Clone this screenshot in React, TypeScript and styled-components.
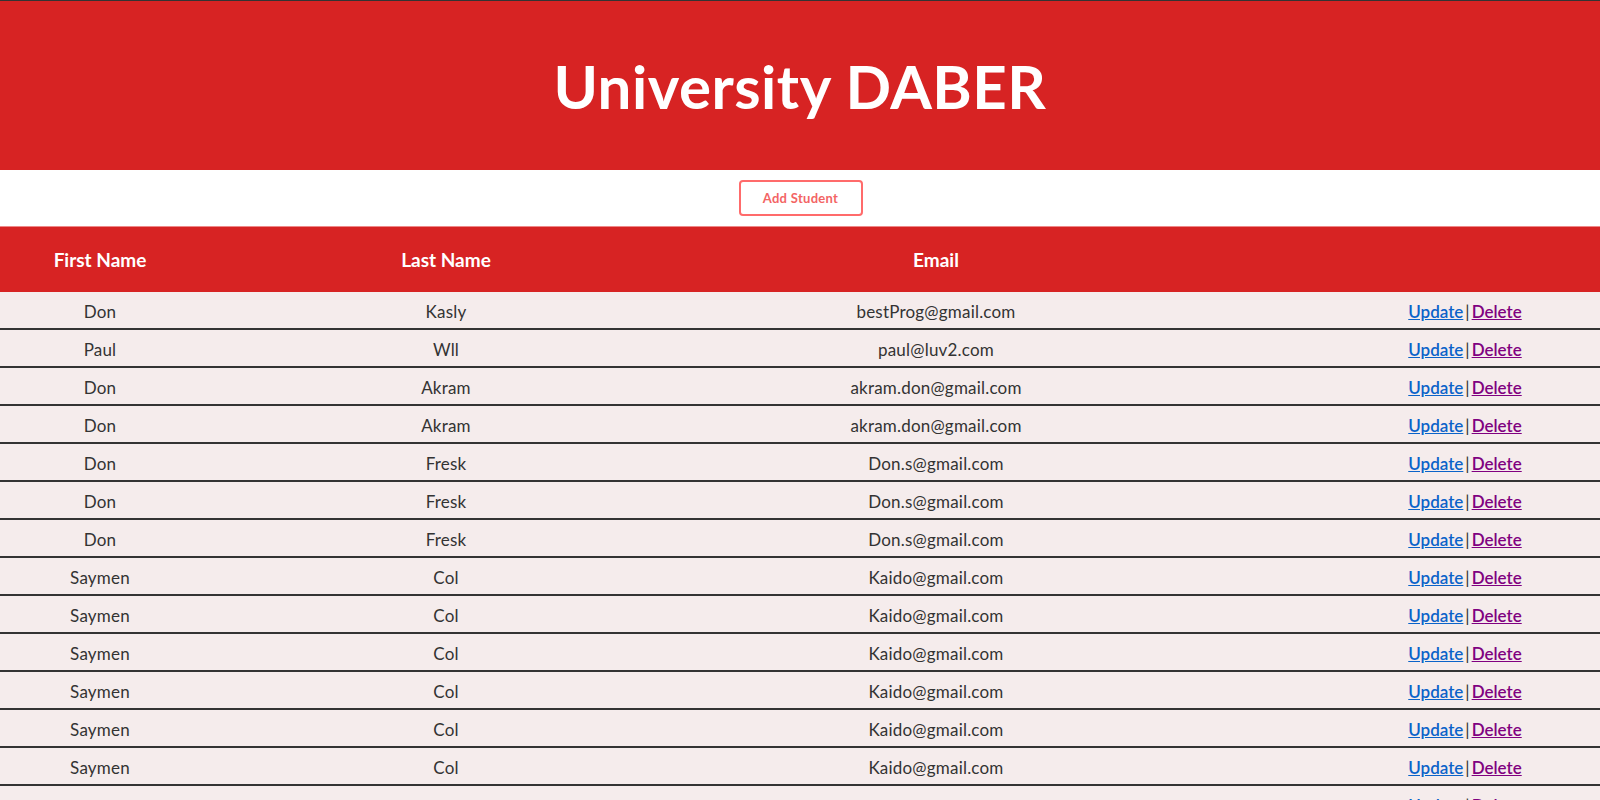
import React from "react";
import styled, { createGlobalStyle } from "styled-components";

type Student = {
  firstName: string;
  lastName: string;
  email: string;
};

const students: Student[] = [
  { firstName: "Don", lastName: "Kasly", email: "bestProg@gmail.com" },
  { firstName: "Paul", lastName: "Wll", email: "paul@luv2.com" },
  { firstName: "Don", lastName: "Akram", email: "akram.don@gmail.com" },
  { firstName: "Don", lastName: "Akram", email: "akram.don@gmail.com" },
  { firstName: "Don", lastName: "Fresk", email: "Don.s@gmail.com" },
  { firstName: "Don", lastName: "Fresk", email: "Don.s@gmail.com" },
  { firstName: "Don", lastName: "Fresk", email: "Don.s@gmail.com" },
  { firstName: "Saymen", lastName: "Col", email: "Kaido@gmail.com" },
  { firstName: "Saymen", lastName: "Col", email: "Kaido@gmail.com" },
  { firstName: "Saymen", lastName: "Col", email: "Kaido@gmail.com" },
  { firstName: "Saymen", lastName: "Col", email: "Kaido@gmail.com" },
  { firstName: "Saymen", lastName: "Col", email: "Kaido@gmail.com" },
  { firstName: "Saymen", lastName: "Col", email: "Kaido@gmail.com" },
  { firstName: "", lastName: "", email: "" },
];

export default function App() {
  return (
    <>
      <GlobalStyle />
      <Page>
        <Header>
          <Title>University DABER</Title>
        </Header>
        <Toolbar>
          <AddButton type="button">Add Student</AddButton>
        </Toolbar>
        <StudentTable>
          <colgroup>
            <col style={{ width: 200 }} />
            <col style={{ width: 492 }} />
            <col style={{ width: 488 }} />
            <col />
          </colgroup>
          <thead>
            <tr>
              <HeadCell>First Name</HeadCell>
              <HeadCell>Last Name</HeadCell>
              <HeadCell>Email</HeadCell>
              <HeadCell />
            </tr>
          </thead>
          <tbody>
            {students.map((s, index) => (
              <Row key={index}>
                <Cell>{s.firstName}</Cell>
                <Cell>{s.lastName}</Cell>
                <Cell>{s.email}</Cell>
                <ActionCell>
                  <UpdateLink href="#">Update</UpdateLink>
                  <Sep>|</Sep>
                  <DeleteLink href="#">Delete</DeleteLink>
                </ActionCell>
              </Row>
            ))}
          </tbody>
        </StudentTable>
      </Page>
    </>
  );
}

const GlobalStyle = createGlobalStyle`
  html, body {
    margin: 0;
    padding: 0;
    background: #ffffff;
  }
  body {
    font-family: "Lato", "Noto Sans", sans-serif;
  }
`;

const Page = styled.div`
  border-top: 1px solid #333;
  height: 799px;
  overflow: hidden;
`;

const Header = styled.header`
  background: #d72323;
  height: 169px;
  display: flex;
  align-items: center;
  justify-content: center;
`;

const Title = styled.h1`
  margin: 0;
  color: #fff;
  font-size: 60px;
  font-weight: 700;
  letter-spacing: 0.5px;
`;

const Toolbar = styled.div`
  height: 56px;
  display: flex;
  align-items: center;
  justify-content: center;
`;

const AddButton = styled.button`
  width: 124px;
  height: 36px;
  margin-left: 1px;
  background: #fff;
  border: 2px solid #ff6b6b;
  border-radius: 4px;
  color: #f36464;
  font-family: inherit;
  font-size: 13px;
  font-weight: 700;
  letter-spacing: 0.3px;
  cursor: pointer;
`;

const StudentTable = styled.table`
  width: 100%;
  border-collapse: collapse;
  table-layout: fixed;
  border-top: 1px solid #e88;
`;

const HeadCell = styled.th`
  background: #d72323;
  color: #fff;
  height: 65px;
  padding: 0;
  font-size: 19px;
  font-weight: 700;
  text-align: center;
`;

const Row = styled.tr`
  background: #f5ecec;
  border-bottom: 2px solid #333;
`;

const Cell = styled.td`
  height: 34px;
  padding: 2px 0 0;
  text-align: center;
  color: #333;
  font-size: 17px;
  letter-spacing: 0.2px;
`;

const ActionCell = styled(Cell)`
  padding-left: 150px;
  font-weight: 600;
  font-size: 17px;
  letter-spacing: 0;
`;

const UpdateLink = styled.a`
  color: #0b63c9;
  text-decoration: underline;
`;

const DeleteLink = styled.a`
  color: #800080;
  text-decoration: underline;
`;

const Sep = styled.span`
  color: #333;
  margin: 0 2px;
  font-weight: 400;
`;
